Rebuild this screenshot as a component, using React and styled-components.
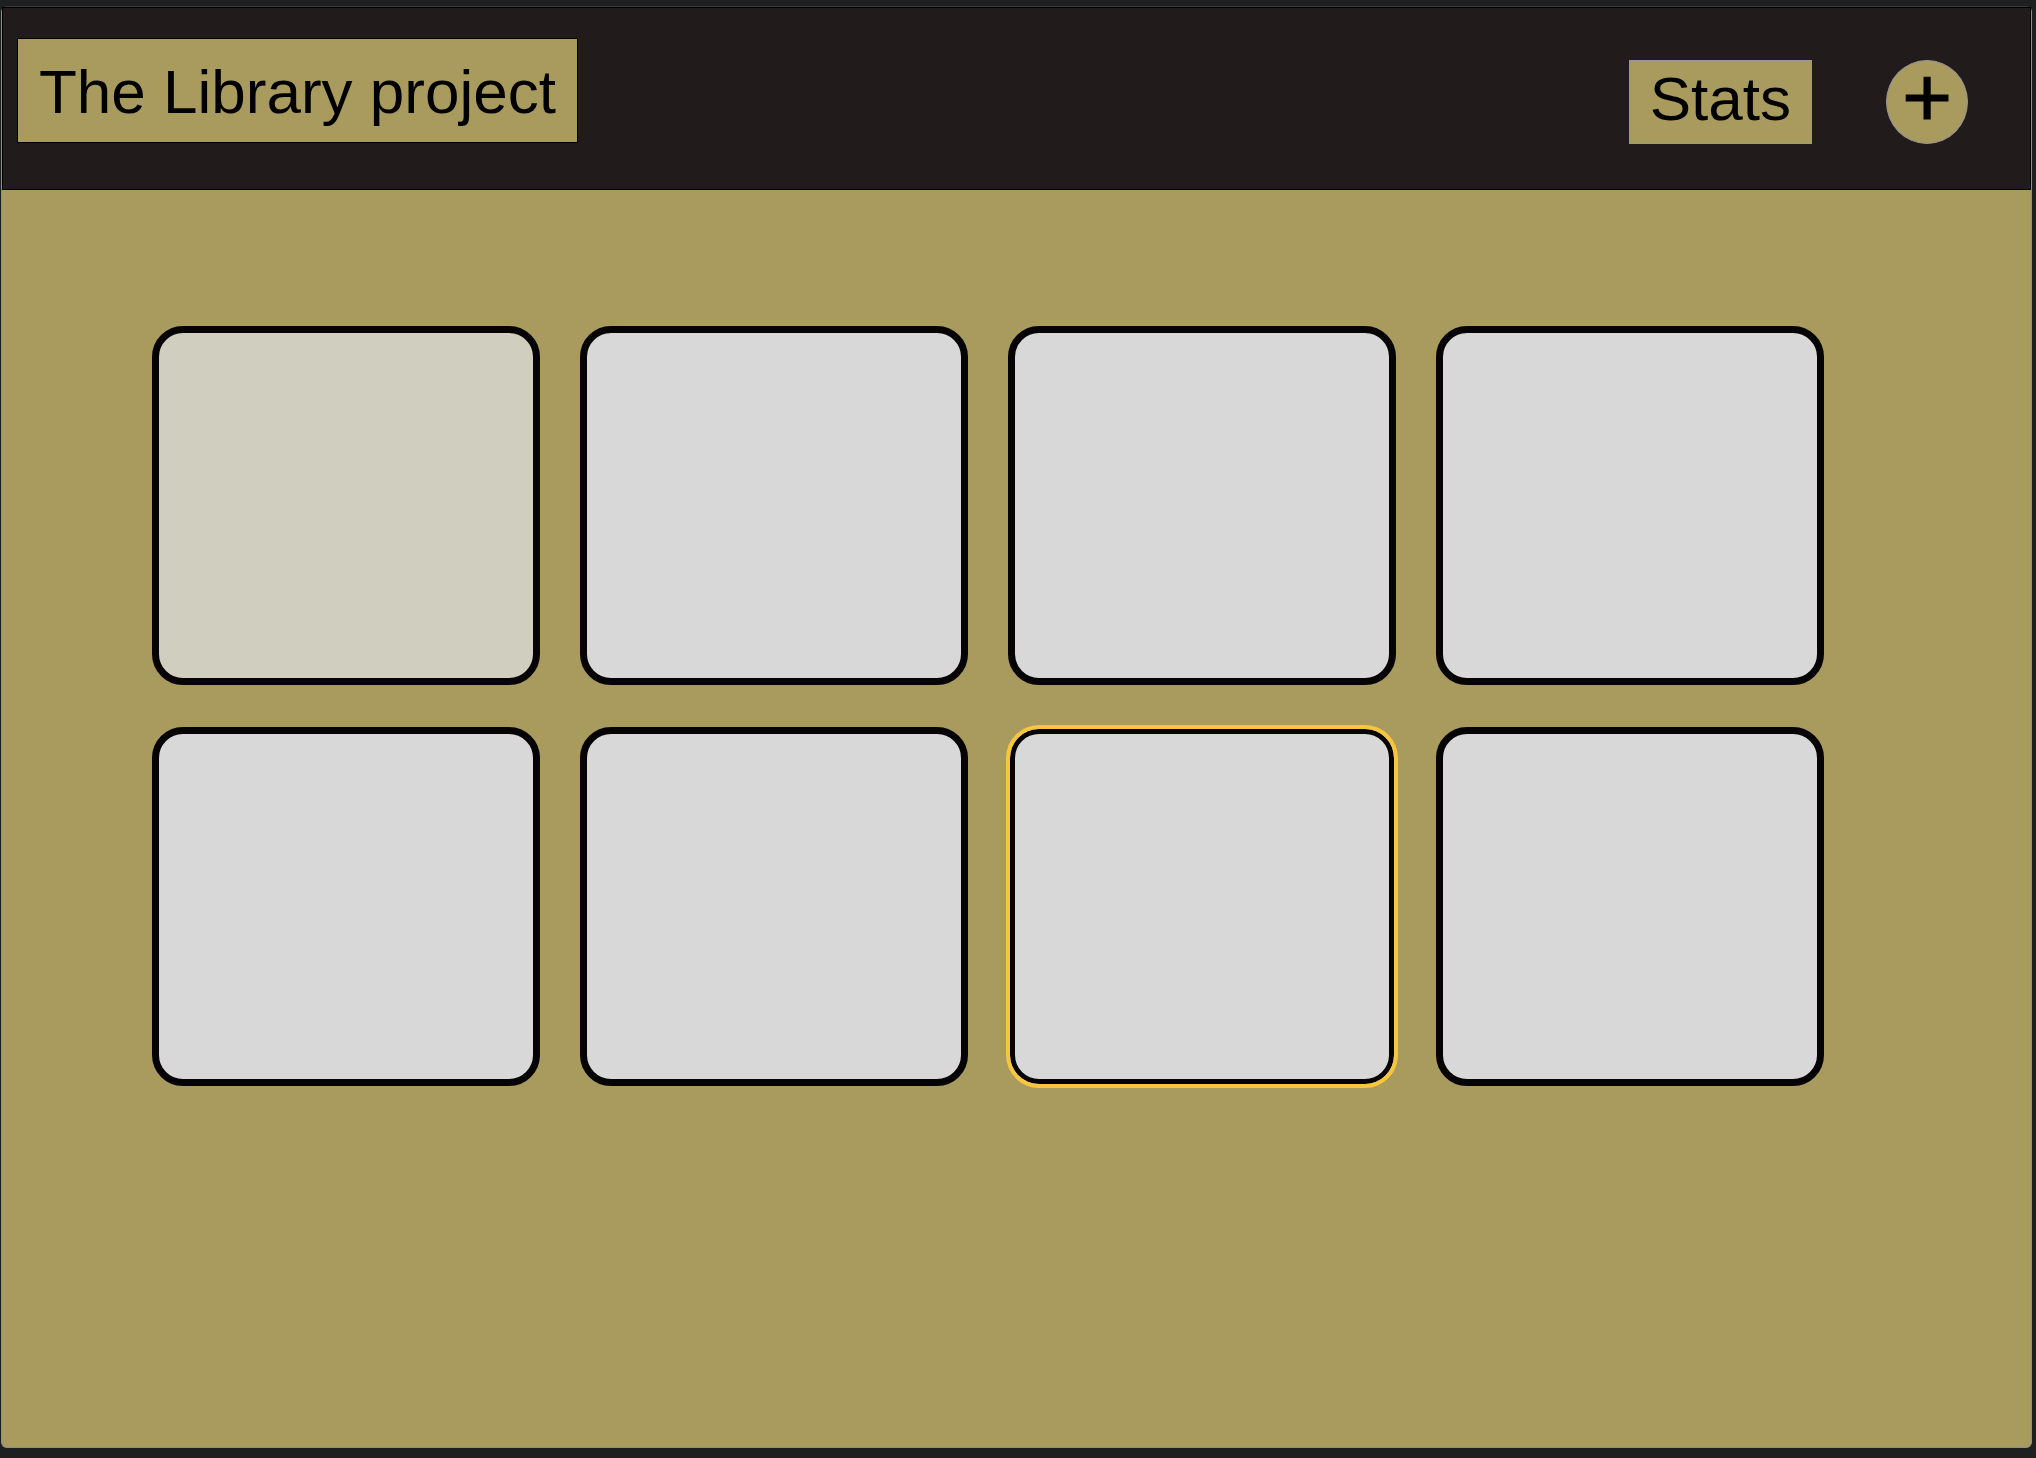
import React from "react";
import styled, { createGlobalStyle } from "styled-components";

const gold = "#a99b5d";

const GlobalStyle = createGlobalStyle`
  * { box-sizing: border-box; }
  body {
    margin: 0;
    background: #1d1f21;
    font-family: "Liberation Sans", Helvetica, Arial, sans-serif;
    color: #000;
  }
`;

const Page = styled.div`
  display: flex;
  flex-direction: column;
  min-height: 100vh;
  padding: 6px 4px 10px 1px;
`;

const Frame = styled.div`
  flex: 1;
  display: flex;
  flex-direction: column;
  border: 1px solid #8f8f8f;
  border-top-color: #3a3a3d;
  border-radius: 6px;
  background: ${gold};
`;

const Header = styled.header`
  display: flex;
  align-items: flex-start;
  justify-content: space-between;
  height: 183px;
  padding: 30px 62px 0 14px;
  border: 1px solid #000;
  background: #211b1b;
`;

const Title = styled.h1`
  margin: 0;
  padding: 17px 21px 15px;
  border: 1px solid #000;
  background: ${gold};
  font-size: 62px;
  font-weight: 400;
  line-height: 71px;
  white-space: nowrap;
`;

const Actions = styled.div`
  display: flex;
  gap: 74px;
  padding-top: 22px;
`;

const ActionButton = styled.button`
  height: 84px;
  padding: 0 20px 6px;
  border: 1px solid #979797;
  background: ${gold};
  color: inherit;
  font-family: inherit;
  font-size: 62px;
  line-height: 72px;
  cursor: pointer;
`;

const AddButton = styled(ActionButton)`
  width: 82px;
  padding: 0 0 10px;
  border-radius: 50%;
  font-size: 86px;
  -webkit-text-stroke: 1px #000;
`;

const Shelf = styled.main`
  display: grid;
  grid-template-columns: repeat(4, 1fr);
  gap: 42px 40px;
  padding: 136px 207px 136px 150px;
`;

const Book = styled.article`
  height: 359px;
  border: ${({ $selected }) => ($selected ? "2px solid #f8c63d" : "7px solid #050303")};
  border-radius: 31px;
  background: ${({ $tinted }) => ($tinted ? "#d0cebe" : "#d8d8d8")};
  box-shadow: ${({ $selected }) =>
    $selected ? "0 0 0 2px #f8c63d, inset 0 0 0 5px #050303" : "none"};
`;

const books = [
  { id: 1, tinted: true },
  { id: 2 },
  { id: 3 },
  { id: 4 },
  { id: 5 },
  { id: 6 },
  { id: 7, selected: true },
  { id: 8 },
];

export default function App() {
  return (
    <>
      <GlobalStyle />
      <Page>
        <Frame>
          <Header>
            <Title>The Library project</Title>
            <Actions>
              <ActionButton type="button">Stats</ActionButton>
              <AddButton type="button">+</AddButton>
            </Actions>
          </Header>
          <Shelf>
            {books.map((book) => (
              <Book key={book.id} $tinted={book.tinted} $selected={book.selected} />
            ))}
          </Shelf>
        </Frame>
      </Page>
    </>
  );
}
